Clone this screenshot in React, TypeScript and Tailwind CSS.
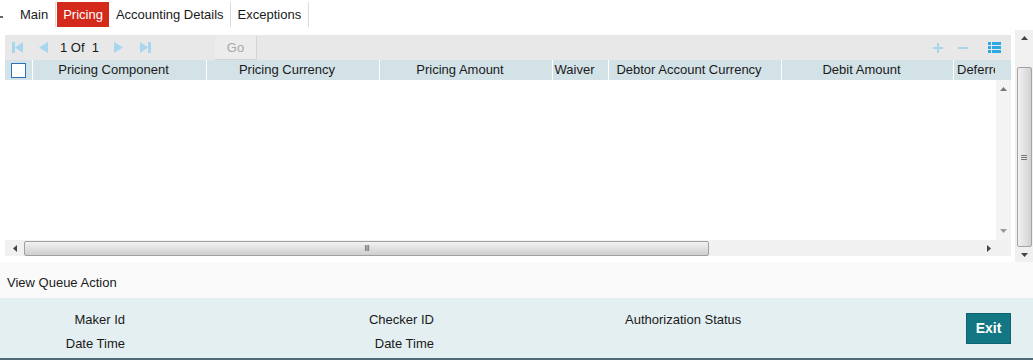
import React from "react";

const cols = [
  { label: "Pricing Component", w: 174 },
  { label: "Pricing Currency", w: 173 },
  { label: "Pricing Amount", w: 173 },
  { label: "Waiver", w: 56 },
  { label: "Debtor Account Currency", w: 173 },
  { label: "Debit Amount", w: 172 },
  { label: "Deferred", w: 41 },
];

function FirstIcon() {
  return (
    <svg width="11" height="11" viewBox="0 0 11 11">
      <rect x="0" y="0" width="3" height="11" fill="#a9d6ef" />
      <polygon points="11,0 3,5.5 11,11" fill="#a9d6ef" />
    </svg>
  );
}
function PrevIcon() {
  return (
    <svg width="10" height="11" viewBox="0 0 10 11">
      <polygon points="10,0 1,5.5 10,11" fill="#a9d6ef" />
    </svg>
  );
}
function NextIcon() {
  return (
    <svg width="10" height="11" viewBox="0 0 10 11">
      <polygon points="0,0 9,5.5 0,11" fill="#a9d6ef" />
    </svg>
  );
}
function LastIcon() {
  return (
    <svg width="11" height="11" viewBox="0 0 11 11">
      <polygon points="0,0 8,5.5 0,11" fill="#a9d6ef" />
      <rect x="8" y="0" width="3" height="11" fill="#a9d6ef" />
    </svg>
  );
}

function Arrow({ dir, color = "#555" }: { dir: "up" | "down" | "left" | "right"; color?: string }) {
  const pts =
    dir === "up"
      ? "0,4 3.5,0 7,4"
      : dir === "down"
      ? "0,0 3.5,4 7,0"
      : dir === "left"
      ? "4,0 0,3.5 4,7"
      : "0,0 4,3.5 0,7";
  const w = dir === "up" || dir === "down" ? 7 : 4;
  const h = dir === "up" || dir === "down" ? 4 : 7;
  return (
    <svg width={w} height={h} viewBox={`0 0 ${w} ${h}`}>
      <polygon points={pts} fill={color} />
    </svg>
  );
}

export default function App() {
  return (
    <div
      className="w-[1033px] h-[360px] bg-white flex flex-col overflow-hidden text-[13px] text-[#1a1a1a]"
      style={{ fontFamily: '"Liberation Sans", Arial, sans-serif' }}
    >
      {/* Tabs */}
      <div className="h-[30px] flex items-start pt-[2px] relative">
        <div className="w-[3px] h-[2px] bg-[#666] mt-[14px]" />
        <div className="flex items-stretch h-[25px] ml-[13px]">
          <div className="pl-[4px] pr-[7px] flex items-center">Main</div>
          <div className="w-px bg-[#dcdcdc]" />
          <div className="px-[6px] flex items-center bg-[#d42a1c] text-white ml-[1px]">Pricing</div>
          <div className="pl-[7px] pr-[6px] flex items-center">Accounting Details</div>
          <div className="w-px bg-[#dcdcdc]" />
          <div className="px-[7px] flex items-center">Exceptions</div>
          <div className="w-px bg-[#dcdcdc]" />
        </div>
      </div>

      {/* Grid + page scrollbar */}
      <div className="h-[232px] flex">
        <div className="flex-1 pl-[5px] pt-[5px] pr-[4px]">
          <div className="flex flex-col h-[223px] w-[1006px]">
            {/* toolbar */}
            <div className="h-[25px] bg-[#e8e8e8] flex items-center">
              <div className="ml-[7px] flex items-center">
                <FirstIcon />
              </div>
              <div className="ml-[15px] flex items-center">
                <PrevIcon />
              </div>
              <div className="ml-[12px] leading-none">1&nbsp;Of&nbsp;&nbsp;1</div>
              <div className="ml-[15px] flex items-center">
                <NextIcon />
              </div>
              <div className="ml-[16px] flex items-center">
                <LastIcon />
              </div>
              <div className="ml-[64px] h-[24px] w-[42px] self-start mt-px bg-[#ececec] border-r border-b border-[#d4d4d4] flex items-center justify-center text-[#a8a8a8]">
                Go
              </div>
              <div className="flex-1" />
              <svg width="10" height="10" viewBox="0 0 10 10" className="mr-[15px]">
                <rect x="4" y="0" width="2" height="10" fill="#a9d6ef" />
                <rect x="0" y="4" width="10" height="2" fill="#a9d6ef" />
              </svg>
              <div className="w-[10px] h-[2px] bg-[#a9d6ef] mr-[20px]" />
              <svg width="13" height="11" viewBox="0 0 13 11" className="mr-[10px]">
                <rect x="0" y="0" width="3" height="3" fill="#2ea8e3" />
                <rect x="4" y="0" width="9" height="3" fill="#2ea8e3" />
                <rect x="0" y="4" width="3" height="3" fill="#2ea8e3" />
                <rect x="4" y="4" width="9" height="3" fill="#2ea8e3" />
                <rect x="0" y="8" width="3" height="3" fill="#2ea8e3" />
                <rect x="4" y="8" width="9" height="3" fill="#2ea8e3" />
              </svg>
            </div>
            {/* header */}
            <div className="h-[20px] bg-[#d3e2e7] flex items-stretch overflow-hidden">
              <div className="w-[28px] shrink-0 flex items-center justify-center border-r border-white">
                <div className="w-[15px] h-[15px] border-[1.5px] border-[#2a72b8] bg-white" />
              </div>
              {cols.map((c, i) => (
                <div
                  key={i}
                  className={
                    "shrink-0 flex items-center whitespace-nowrap overflow-hidden " +
                    (i < cols.length - 1 ? "border-r border-white justify-center pr-[12px]" : "pl-[3px]")
                  }
                  style={{ width: c.w }}
                >
                  {c.label}
                </div>
              ))}
            </div>
            {/* body */}
            <div className="h-[160px] flex">
              <div className="flex-1 bg-white" />
              <div className="w-[15px] bg-[#f3f3f3] flex flex-col items-center justify-between py-[7px]">
                <Arrow dir="up" color="#777" />
                <Arrow dir="down" color="#999" />
              </div>
            </div>
            {/* horizontal scrollbar */}
            <div className="h-[16px] flex items-center bg-[#f1f1f1]">
              <div className="w-[19px] h-full flex items-center justify-center">
                <Arrow dir="left" color="#444" />
              </div>
              <div className="w-[685px] h-[15px] border border-[#a0a0a0] rounded-[2px] bg-gradient-to-b from-[#f2f2f2] via-[#e0e0e0] to-[#cfcfcf] flex items-center justify-center">
                <span className="text-[9px] leading-none text-[#666] tracking-[-1px]">III</span>
              </div>
              <div className="flex-1" />
              <div className="w-[10px] h-full flex items-center justify-center mr-[16px]">
                <Arrow dir="right" color="#444" />
              </div>
              <div className="w-[1px]" />
            </div>
          </div>
        </div>
        {/* page scrollbar */}
        <div className="w-[18px] bg-[#f0f0f0] flex flex-col items-center">
          <div className="h-[14px] mt-[1px] flex items-center justify-center">
            <Arrow dir="up" color="#444" />
          </div>
          <div className="mt-[22px] w-[15px] h-[180px] border border-[#a3a3a3] rounded-[2px] bg-gradient-to-r from-[#f0f0f0] via-[#e2e2e2] to-[#d0d0d0] flex items-center justify-center">
            <div className="flex flex-col gap-[1px]">
              <div className="w-[6px] h-px bg-[#777]" />
              <div className="w-[6px] h-px bg-[#777]" />
              <div className="w-[6px] h-px bg-[#777]" />
            </div>
          </div>
          <div className="flex-1 flex items-center justify-center">
            <Arrow dir="down" color="#444" />
          </div>
        </div>
      </div>

      {/* View Queue Action */}
      <div className="h-[36px] bg-[#fafafa] flex items-center pl-[7px] pt-[6px]">View Queue Action</div>

      {/* Footer */}
      <div className="flex-1 bg-[#e4eff2] border-b-2 border-[#4d6a75] flex">
        <div className="w-[125px] flex flex-col items-end pt-[14px] gap-[9px] leading-[15px]">
          <div>Maker Id</div>
          <div>Date Time</div>
        </div>
        <div className="w-[309px] flex flex-col items-end pt-[14px] gap-[9px] leading-[15px]">
          <div>Checker ID</div>
          <div>Date Time</div>
        </div>
        <div className="ml-[191px] pt-[14px] leading-[15px]">Authorization Status</div>
        <div className="flex-1" />
        <div className="mt-[15px] mr-[22px] w-[45px] h-[31px] bg-[#137683] border border-[#0f6370] text-white font-bold text-[14px] flex items-center justify-center">
          Exit
        </div>
      </div>
    </div>
  );
}
